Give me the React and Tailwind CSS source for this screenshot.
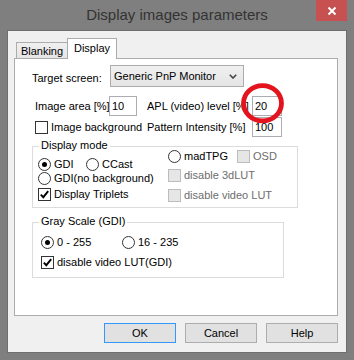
import React from "react";

const font = "font-['Liberation_Sans',Arial,sans-serif]";

function Check({ checked, disabled }) {
  return (
    <span
      className={`w-[13px] h-[13px] shrink-0 border flex items-center justify-center ${
        disabled ? "border-[#bcbcbc] bg-[#e6e6e6]" : "border-[#333333] bg-white"
      }`}
    >
      {checked && (
        <svg width="11" height="11" viewBox="0 0 11 11">
          <path d="M1.8 5.6 L4.3 8.2 L9.2 2.2" stroke="#000" strokeWidth="1.9" fill="none" />
        </svg>
      )}
    </span>
  );
}

function Radio({ checked }) {
  return (
    <span className="w-[13px] h-[13px] shrink-0 rounded-full border border-[#333333] bg-white flex items-center justify-center">
      {checked && <span className="w-[5px] h-[5px] rounded-full bg-black" />}
    </span>
  );
}

function Option({ control, label, disabled, className = "" }) {
  return (
    <div className={`flex items-center gap-[3px] h-[14px] whitespace-nowrap ${className}`}>
      {control}
      <span className={disabled ? "text-[#6d6d6d]" : "text-black"}>{label}</span>
    </div>
  );
}

function Field({ value, width }) {
  return (
    <div className={`${width} h-[20px] shrink-0 border border-[#abadb3] bg-white pl-[2px] flex items-center`}>
      {value}
    </div>
  );
}

function Group({ title, className, children }) {
  return (
    <div className={`relative border border-[#dcdcdc] ${className}`}>
      <span className="absolute left-[6px] top-[-8px] bg-white px-[2px] leading-[13px]">{title}</span>
      {children}
    </div>
  );
}

function Button({ children, primary }) {
  return (
    <button
      className={`w-[72px] h-[20px] bg-[#e1e1e1] border flex items-center justify-center ${
        primary ? "border-[#3399ff]" : "border-[#adadad]"
      }`}
    >
      {children}
    </button>
  );
}

export default function App() {
  return (
    <div className={`relative w-[354px] h-[360px] bg-[#7f7f7f] flex flex-col px-[7px] pb-[7px] text-[11px] leading-[13px] text-black ${font}`}>
      {/* title bar */}
      <div className="h-[30px] flex items-start -mx-[7px]">
        <div className="w-[38px]" />
        <div className="flex-1 text-center text-[15px] leading-[30px] text-[#333333]">
          Display images parameters
        </div>
        <div className="w-[31px] h-[21px] mr-[7px] bg-[#c75050] flex items-center justify-center">
          <svg width="10" height="10" viewBox="0 0 10 10">
            <path d="M1.5 1.5 L8.5 8.5 M8.5 1.5 L1.5 8.5" stroke="#fff" strokeWidth="2" />
          </svg>
        </div>
      </div>

      {/* client area */}
      <div className="flex-1 border border-[#6e6e6e] bg-[#f0f0f0] pt-[7px] pl-[6px] pr-[8px] pb-[9px] flex flex-col">
        {/* tabs */}
        <div className="h-[20px] flex items-end pl-[2px]">
          <div className="w-[52px] h-[16px] border border-b-0 border-[#acacac] bg-gradient-to-b from-[#f0f0f0] to-[#e5e5e5] flex items-center justify-center pt-[1px]">
            Blanking
          </div>
          <div className="relative z-10 -ml-px -mb-px w-[50px] h-[21px] border border-b-0 border-[#acacac] bg-white flex items-start justify-center pt-[3px]">
            Display
          </div>
        </div>

        {/* panel */}
        <div className="h-[258px] border border-[#acacac] bg-white pl-[17px] flex flex-col whitespace-nowrap">
          <div className="mt-[6px] h-[22px] flex items-center">
            <span className="w-[78px] shrink-0 pt-[4px]">Target screen:</span>
            <div className="w-[134px] h-[22px] border border-[#acacac] bg-gradient-to-b from-[#f0f0f0] to-[#e5e5e5] flex items-center justify-between pl-[3px] pr-[6px]">
              <span>Generic PnP Monitor</span>
              <svg width="8" height="5" viewBox="0 0 8 5">
                <path d="M0.8 0.8 L4 4 L7.2 0.8" stroke="#444" strokeWidth="1.6" fill="none" />
              </svg>
            </div>
          </div>

          <div className="mt-[9px] h-[20px] flex items-center pl-[3px]">
            <span className="w-[74px] shrink-0">Image area [%]</span>
            <Field value="10" width="w-[28px]" />
            <span className="ml-[10px] w-[105px] shrink-0 overflow-hidden">APL (video) level [%]</span>
            <Field value="20" width="w-[30px]" />
          </div>

          <div className="mt-[1px] h-[20px] flex items-center pl-[3px]">
            <Option className="w-[112px] shrink-0" control={<Check />} label="Image background" />
            <span className="w-[105px] shrink-0">Pattern Intensity [%]</span>
            <Field value="100" width="w-[30px]" />
          </div>

          <Group title="Display mode" className="mt-[9px] w-[266px] h-[62px] flex">
            <div className="w-[135px] shrink-0 pl-[5px] pt-[10px] flex flex-col">
              <div className="flex">
                <Option className="w-[48px]" control={<Radio checked />} label="GDI" />
                <Option control={<Radio />} label="CCast" />
              </div>
              <Option control={<Radio />} label="GDI(no background)" />
              <Option className="mt-[2px]" control={<Check checked />} label="Display Triplets" />
            </div>
            <div className="pt-[2px] flex flex-col">
              <div className="flex">
                <Option className="w-[69px]" control={<Radio />} label="madTPG" />
                <Option control={<Check disabled />} label="OSD" disabled />
              </div>
              <Option className="mt-[5px]" control={<Check disabled />} label="disable 3dLUT" disabled />
              <Option className="mt-[6px]" control={<Check disabled />} label="disable video LUT" disabled />
            </div>
          </Group>

          <Group title="Gray Scale (GDI)" className="mt-[14px] w-[252px] h-[56px] pl-[8px] pt-[12px] flex flex-col">
            <div className="flex">
              <Option className="w-[81px]" control={<Radio checked />} label="0 - 255" />
              <Option control={<Radio />} label="16 - 235" />
            </div>
            <Option className="mt-[6px]" control={<Check checked />} label="disable video LUT(GDI)" />
          </Group>
        </div>

        {/* buttons */}
        <div className="mt-[7px] flex justify-end gap-[9px]">
          <Button primary>OK</Button>
          <Button>Cancel</Button>
          <Button>Help</Button>
        </div>
      </div>

      {/* annotation ring */}
      <svg className="absolute left-[238px] top-[80px] pointer-events-none" width="50" height="48" viewBox="0 0 50 48">
        <ellipse cx="24.5" cy="23.3" rx="19" ry="17.6" stroke="#e3141d" strokeWidth="4.8" fill="none" />
      </svg>
    </div>
  );
}
